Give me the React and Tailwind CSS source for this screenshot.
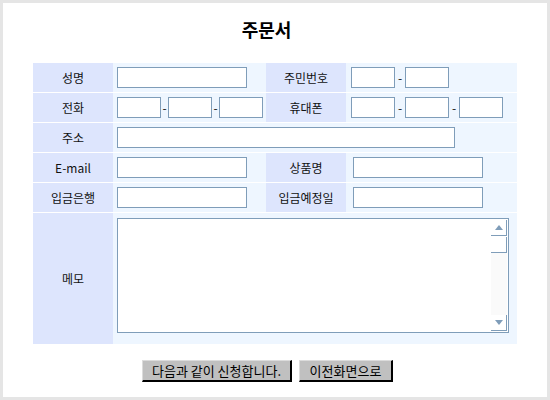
import React from "react";

const font = { fontFamily: '"Noto Sans CJK KR", "Noto Sans", sans-serif' };

function Input({ w }) {
  return <div className={`h-[21px] border border-[#7f9db9] bg-white ${w}`} />;
}

function Dash({ w }) {
  return <span className={`${w} text-center text-[12px] leading-none text-[#111]`}>-</span>;
}

function Label({ children, tall }) {
  return (
    <div className={`flex items-center justify-center bg-[#dde5fd] text-[12px] text-[#111] ${tall ? "h-[131px]" : "h-[29px]"}`}>
      {children}
    </div>
  );
}

function Value({ children, span, pl = "pl-[4px]" }) {
  return (
    <div className={`flex h-[29px] items-center bg-[#eef6ff] ${pl} ${span || ""}`}>{children}</div>
  );
}

function ScrollBtn({ up }) {
  return (
    <div className="flex h-[16px] w-[16px] items-center justify-center border-r border-b border-[#7f9db9] bg-white">
      <svg width="8" height="5" viewBox="0 0 8 5">
        {up ? <polygon points="0,5 8,5 4,0" fill="#7f9db9" /> : <polygon points="0,0 8,0 4,5" fill="#7f9db9" />}
      </svg>
    </div>
  );
}

export default function App() {
  return (
    <div className="h-[400px] w-[550px] bg-[#e5e5e5] p-[3px]" style={font}>
      <div className="h-full w-full bg-white">
        <div className="pt-[14px] pr-[17px] text-center text-[18px] font-bold leading-[24px] text-black">주문서</div>
        <div className="ml-[30px] mt-[22px] grid w-[484px] grid-cols-[80px_153px_80px_171px] gap-y-px">
          <Label>성명</Label>
          <Value><Input w="w-[130px]" /></Value>
          <Label>주민번호</Label>
          <Value pl="pl-[5px]">
            <Input w="w-[44px]" />
            <Dash w="w-[10px]" />
            <Input w="w-[44px]" />
          </Value>

          <Label>전화</Label>
          <Value>
            <Input w="w-[44px]" />
            <Dash w="w-[7px]" />
            <Input w="w-[44px]" />
            <Dash w="w-[7px]" />
            <Input w="w-[44px]" />
          </Value>
          <Label>휴대폰</Label>
          <Value pl="pl-[5px]">
            <Input w="w-[44px]" />
            <Dash w="w-[10px]" />
            <Input w="w-[44px]" />
            <Dash w="w-[10px]" />
            <Input w="w-[44px]" />
          </Value>

          <Label>주소</Label>
          <Value span="col-span-3"><Input w="w-[338px]" /></Value>

          <Label>E-mail</Label>
          <Value><Input w="w-[130px]" /></Value>
          <Label>상품명</Label>
          <Value pl="pl-[7px]"><Input w="w-[130px]" /></Value>

          <Label>입금은행</Label>
          <Value><Input w="w-[130px]" /></Value>
          <Label>입금예정일</Label>
          <Value pl="pl-[7px]"><Input w="w-[130px]" /></Value>

          <Label tall>메모</Label>
          <div className="col-span-3 h-[131px] bg-[#eef6ff] pl-[4px] pt-[5px]">
            <div className="flex h-[115px] w-[392px] border border-[#7f9db9] bg-white p-px">
              <div className="flex-1" />
              <div className="flex w-[16px] flex-col">
                <ScrollBtn up />
                <div className="mt-px h-[16px] w-[16px] border-r border-b border-[#7f9db9] bg-white" />
                <div className="flex-1 bg-[#fafafa]" />
                <ScrollBtn />
              </div>
            </div>
          </div>
        </div>
        <div className="mt-[16px] flex gap-[7px] pl-[139px]">
          <button className="flex h-[22px] w-[150px] items-center justify-center border-t border-l border-t-[#dcdcdc] border-l-[#dcdcdc] border-r-2 border-b-2 border-r-black border-b-black bg-[#c0c0c0] text-[13px] leading-none text-black">
            다음과 같이 신청합니다.
          </button>
          <button className="flex h-[22px] w-[94px] items-center justify-center border-t border-l border-t-[#dcdcdc] border-l-[#dcdcdc] border-r-2 border-b-2 border-r-black border-b-black bg-[#c0c0c0] text-[13px] leading-none text-black">
            이전화면으로
          </button>
        </div>
      </div>
    </div>
  );
}
